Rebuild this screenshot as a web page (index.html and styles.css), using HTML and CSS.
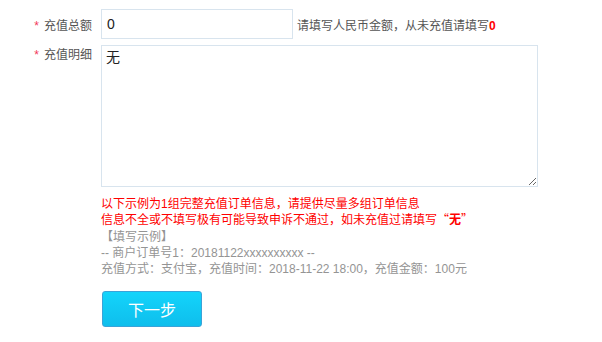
FILE: index.html
```html
<!DOCTYPE html>
<html lang="zh-CN">
<head>
    <meta charset="UTF-8">
    <title>充值申诉</title>
    <link rel="stylesheet" href="styles.css">
</head>
<body>
    <form class="recharge-form">
        <div class="form-row">
            <label class="form-label"><span class="star">*</span>充值总额</label>
            <input type="text" class="amount-input" value="0">
            <span class="hint">请填写人民币金额，从未充值请填写<b>0</b></span>
        </div>
        <div class="form-row top">
            <label class="form-label"><span class="star">*</span>充值明细</label>
            <textarea class="detail-input">无</textarea>
        </div>
        <div class="notes">
            <p class="warn">以下示例为1组完整充值订单信息，请提供尽量多组订单信息</p>
            <p class="warn">信息不全或不填写极有可能导致申诉不通过，如未充值过请填写<span class="cjk">“<b>无</b>”</span></p>
            <p class="sample">【填写示例】</p>
            <p class="sample">-- 商户订单号1：20181122xxxxxxxxxx --</p>
            <p class="sample">充值方式：支付宝，充值时间：2018-11-22 18:00，充值金额：100元</p>
        </div>
        <div class="actions">
            <button type="button" class="next-btn">下一步</button>
        </div>
    </form>
</body>
</html>
```

FILE: styles.css
```css
body {
    margin: 0;
    padding: 0;
    background: #fff;
    font-family: "Liberation Sans", "Noto Sans CJK SC", sans-serif;
    font-size: 12px;
    color: #555;
}

.recharge-form {
    padding-top: 9px;
}

.form-row {
    display: flex;
    align-items: center;
    margin-bottom: 6px;
}

.form-row.top {
    align-items: flex-start;
}

.form-label {
    width: 92px;
    margin-right: 9px;
    text-align: right;
    color: #555;
}

.star {
    color: #f2385a;
    margin-right: 5px;
}

.amount-input {
    width: 192px;
    height: 30px;
    box-sizing: border-box;
    border: 1px solid #d8e4ee;
    padding: 0 5px;
    font-family: "Liberation Sans", "Noto Sans CJK SC", sans-serif;
    font-size: 14px;
    color: #222;
    outline: none;
}

.hint {
    margin-left: 4px;
    color: #555;
}

.hint b {
    color: #f00;
}

.detail-input {
    width: 437px;
    height: 142px;
    box-sizing: border-box;
    border: 1px solid #d8e4ee;
    padding: 2px 4px;
    font-family: "Noto Sans CJK SC", sans-serif;
    font-size: 14px;
    line-height: 16px;
    color: #222;
    resize: both;
    outline: none;
}

.notes {
    margin-left: 101px;
    margin-top: 9px;
}

.notes p {
    margin: 0;
    line-height: 16px;
}

.warn {
    color: #f00;
}

.warn:first-child {
    margin-bottom: -1px;
}

.warn + .sample {
    margin-top: 1px;
}

.cjk {
    font-family: "Noto Sans CJK SC", sans-serif;
}

.sample {
    color: #949494;
}

.actions {
    margin-left: 102px;
    margin-top: 14px;
}

.next-btn {
    width: 100px;
    height: 36px;
    border: 1px solid #3aa3d8;
    border-radius: 3px;
    background: linear-gradient(#13d4fb, #0fbeec);
    color: #fff;
    font-family: "Noto Sans CJK SC", sans-serif;
    font-size: 16px;
    cursor: pointer;
}
```
